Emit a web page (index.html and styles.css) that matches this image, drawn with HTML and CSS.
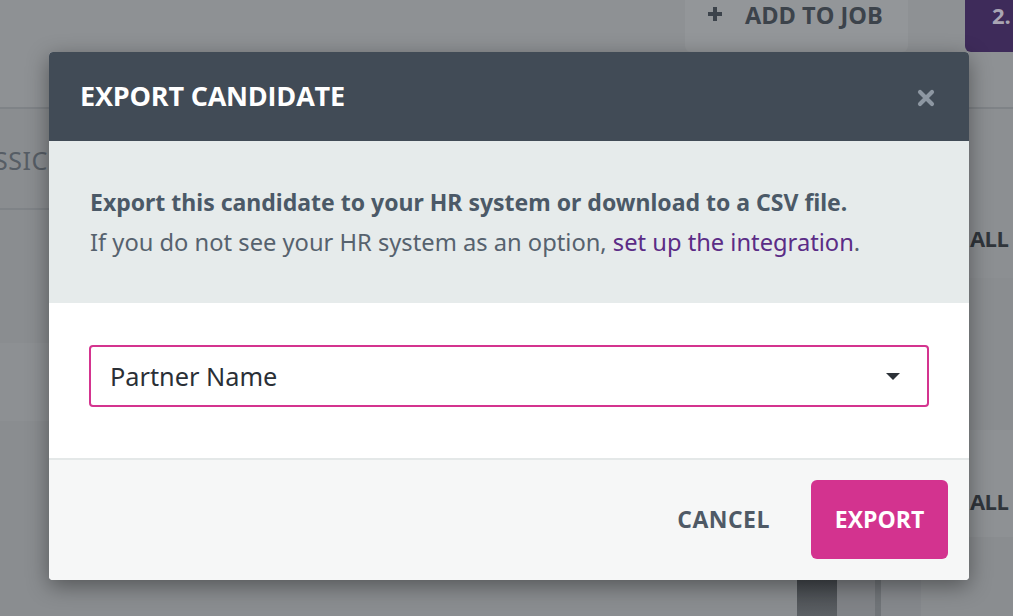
FILE: index.html
```html
<!DOCTYPE html>
<html lang="en">
<head>
<meta charset="utf-8">
<title>Export Candidate</title>
<link rel="stylesheet" href="styles.css">
</head>
<body>
<div class="page">
  <div class="topbar">
    <div class="add-job">
      <svg class="plus" width="14" height="14" viewBox="0 0 14 14" aria-hidden="true">
        <path d="M7 0 V14 M0 7 H14" stroke="#3c434b" stroke-width="4"/>
      </svg>
      <span class="add-label">ADD TO JOB</span>
    </div>
    <div class="step">2.</div>
  </div>
  <div class="content">
    <div class="col-left">
      <div class="tabs"><span class="tab-text">SSIC</span></div>
      <div class="gap-a"></div>
      <div class="band-a"></div>
    </div>
    <div class="col-right">
      <div class="row-r1"><span class="all">ALL</span></div>
      <div class="gap-r"></div>
      <div class="row-r2"><span class="all">ALL</span></div>
      <div class="stripes">
        <div class="s1"></div><div class="s2"></div><div class="s3"></div><div class="s4"></div>
      </div>
    </div>
  </div>
</div>

<div class="modal">
  <div class="modal-header">
    <h1 class="modal-title">EXPORT CANDIDATE</h1>
    <svg class="close" width="18" height="18" viewBox="0 0 18 18" aria-hidden="true">
      <path d="M3 3 L15 15 M15 3 L3 15" stroke="#8d97a2" stroke-width="4.2" stroke-linecap="round"/>
    </svg>
  </div>
  <div class="modal-intro">
    <p class="lead">Export this candidate to your HR system or download to a CSV file.</p>
    <p class="sub">If you do not see your HR system as an option, <a class="link" href="#">set up the integration</a>.</p>
  </div>
  <div class="modal-body">
    <div class="select">
      <span class="select-value">Partner Name</span>
      <span class="caret"></span>
    </div>
  </div>
  <div class="modal-footer">
    <button class="btn-cancel">CANCEL</button>
    <button class="btn-export">EXPORT</button>
  </div>
</div>
</body>
</html>
```

FILE: styles.css
```css
* { box-sizing: border-box; }
html, body { margin: 0; padding: 0; }
body {
  width: 1013px;
  height: 616px;
  overflow: hidden;
  background: #8a8d90;
  font-family: "Noto Sans", Lato, sans-serif;
}
.page {
  width: 1013px;
  height: 616px;
  display: flex;
  flex-direction: column;
}
.topbar {
  height: 109px;
  background: #8e9194;
  border-bottom: 2px solid #7f8387;
  display: flex;
  justify-content: flex-end;
  align-items: flex-start;
}
.add-job {
  width: 223px;
  height: 52px;
  margin-right: 57px;
  background: #939699;
  border-radius: 0 0 6px 6px;
  color: #3c434b;
  font-family: "Open Sans", Lato, sans-serif;
  font-weight: 700;
  font-size: 23.5px;
  line-height: 30px;
  padding: 0 0 0 23px;
  display: flex;
  align-items: flex-start;
}
.plus { display: block; margin: 7px 23px 0 0; }
.add-label { letter-spacing: 0; }
.step {
  width: 48px;
  height: 52px;
  background: #3e2b5a;
  border-radius: 0 0 0 6px;
  color: #a9a5b3;
  font-family: "Open Sans", Lato, sans-serif;
  font-weight: 700;
  font-size: 22px;
  line-height: 30px;
  padding: 0 0 0 27px;
}
.content {
  flex: 1;
  display: flex;
}
.col-left {
  width: 760px;
  display: flex;
  flex-direction: column;
}
.tabs {
  height: 101px;
  border-bottom: 2px solid #7f8387;
  padding: 34px 0 0 0;
  overflow: hidden;
}
.tab-text {
  display: block;
  margin-left: -6px;
  color: #565d65;
  font-size: 25px;
  line-height: 34px;
  font-weight: 400;
  letter-spacing: 0.5px;
}
.gap-a { height: 133px; }
.band-a { height: 78px; background: #8d9093; }
.col-right {
  flex: 1;
  display: flex;
  flex-direction: column;
}
.row-r1 {
  height: 169px;
  background: #8c8f92;
  padding: 114px 0 0 210px;
}
.all {
  display: block;
  color: #30353b;
  font-family: "Open Sans", Lato, sans-serif;
  font-size: 22px;
  line-height: 30px;
  font-weight: 700;
  letter-spacing: -0.6px;
}
.gap-r { height: 152px; }
.row-r2 {
  height: 107px;
  background: #8e9194;
  padding: 56px 0 0 210px;
}
.stripes {
  margin-top: 43px;
  height: 36px;
  display: flex;
  padding-left: 37px;
}
.s1 { width: 40px; background: linear-gradient(#44484d, #5c6064); }
.s2 { width: 38px; background: #808387; }
.s3 { width: 6px; background: #707478; }
.s4 { width: 40px; background: #85888c; }

/* modal */
.modal {
  position: absolute;
  left: 49px;
  top: 52px;
  width: 920px;
  border-radius: 4px;
  overflow: hidden;
  box-shadow: 0 6px 22px rgba(0, 0, 0, 0.4);
  background: #fff;
}
.modal-header {
  height: 89px;
  background: #414b56;
  display: flex;
  align-items: center;
  justify-content: space-between;
  padding: 0 34px 0 31px;
}
.modal-title {
  margin: 0 0 2px 0;
  color: #fff;
  font-family: "Open Sans", Lato, sans-serif;
  font-size: 27px;
  font-weight: 700;
  letter-spacing: -0.2px;
}
.close { display: block; margin-top: 2px; }
.modal-intro {
  height: 162px;
  background: #e6ebeb;
  padding: 41px 0 0 41px;
}
.lead, .sub {
  margin: 0;
  line-height: 40px;
}
.lead { font-size: 23px; font-weight: 700; color: #4b5967; letter-spacing: 0; }
.sub { font-size: 23.7px; color: #56626e; }
.link { color: #5b2c86; text-decoration: none; }
.modal-body {
  height: 155px;
  padding: 42px 40px 0 40px;
}
.select {
  height: 62px;
  border: 2px solid #d4348f;
  border-radius: 4px;
  display: flex;
  align-items: center;
  justify-content: space-between;
  padding: 0 27px 0 19px;
}
.select-value {
  font-size: 25.3px;
  color: #2a2f36;
}
.caret {
  width: 0;
  height: 0;
  border-left: 7px solid transparent;
  border-right: 7px solid transparent;
  border-top: 7px solid #2d3238;
  margin-top: 1px;
}
.modal-footer {
  height: 122px;
  border-top: 2px solid #e4e8e8;
  background: #f6f7f7;
  display: flex;
  justify-content: flex-end;
  align-items: flex-start;
  padding: 20px 21px 0 0;
}
.btn-cancel, .btn-export {
  font-family: "Open Sans", Lato, sans-serif;
  font-weight: 700;
  font-size: 23px;
  border: none;
  cursor: pointer;
  padding: 0 0 2px 0;
}
.btn-cancel {
  background: transparent;
  color: #4f5a66;
  height: 79px;
  margin-right: 41px;
  letter-spacing: 0.5px;
}
.btn-export {
  width: 137px;
  height: 79px;
  background: #d3338f;
  color: #fff;
  border-radius: 6px;
  letter-spacing: 0;
}
```
